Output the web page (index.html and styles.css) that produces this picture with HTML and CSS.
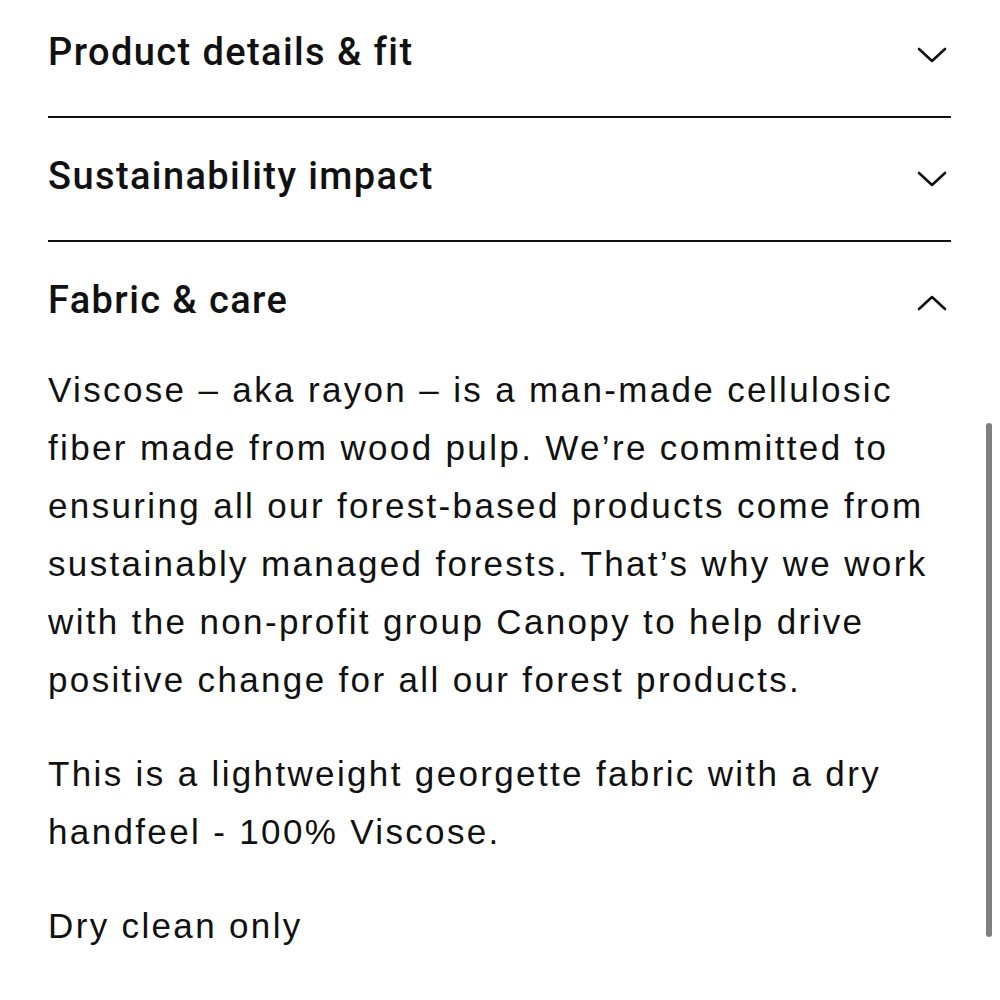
FILE: index.html
```html
<!DOCTYPE html>
<html lang="en">
<head>
<meta charset="utf-8">
<title>Fabric &amp; care</title>
<link rel="stylesheet" href="styles.css">
</head>
<body>
<div class="accordion">
  <section class="item">
    <div class="item-head">
      <h2 class="item-title">Product details &amp; fit</h2>
      <svg class="chev" width="30" height="16" viewBox="0 0 30 16"><polyline points="2,2 15,14 28,2" fill="none" stroke="#111" stroke-width="2.6" stroke-linecap="round" stroke-linejoin="round"/></svg>
    </div>
  </section>
  <section class="item">
    <div class="item-head">
      <h2 class="item-title">Sustainability impact</h2>
      <svg class="chev" width="30" height="16" viewBox="0 0 30 16"><polyline points="2,2 15,14 28,2" fill="none" stroke="#111" stroke-width="2.6" stroke-linecap="round" stroke-linejoin="round"/></svg>
    </div>
  </section>
  <section class="item open">
    <div class="item-head">
      <h2 class="item-title">Fabric &amp; care</h2>
      <svg class="chev" width="30" height="16" viewBox="0 0 30 16"><polyline points="2,14 15,2 28,14" fill="none" stroke="#111" stroke-width="2.6" stroke-linecap="round" stroke-linejoin="round"/></svg>
    </div>
    <div class="item-body">
      <p>Viscose – aka rayon – is a man-made cellulosic fiber made from wood pulp. We’re committed to ensuring all our forest-based products come from sustainably managed forests. That’s why we work with the non-profit group Canopy to help drive positive change for all our forest products.</p>
      <p>This is a lightweight georgette fabric with a dry handfeel - 100% Viscose.</p>
      <p>Dry clean only</p>
    </div>
  </section>
</div>
<div class="scrollbar"></div>
</body>
</html>
```
FILE: styles.css
```css
html, body {
  margin: 0;
  padding: 0;
  background: #fff;
}
body {
  font-family: "Liberation Sans", Arial, sans-serif;
  color: #111;
  width: 1000px;
  height: 1000px;
  overflow: hidden;
  position: relative;
}
.accordion {
  margin: -6px 49px 0 48px;
}
.item {
  border-bottom: 2px solid #111;
}
.item.open {
  border-bottom: none;
}
.item-head {
  display: flex;
  align-items: center;
  justify-content: space-between;
  padding: 36px 4px 42px 0;
}
.item-title {
  margin: 0;
  font-family: Roboto, "Liberation Sans", sans-serif;
  font-size: 38px;
  line-height: 44px;
  font-weight: 500;
  letter-spacing: 1.4px;
}
.chev {
  display: block;
  margin-top: 6px;
}
.item-body {
  margin-top: -3px;
}
.item-body p {
  margin: 0 0 36px;
  font-size: 35px;
  line-height: 58px;
  letter-spacing: 2.35px;
}
.scrollbar {
  position: absolute;
  left: 986px;
  top: 423px;
  width: 6px;
  height: 514px;
  border-radius: 3px;
  background: #7f7f7f;
}
```
